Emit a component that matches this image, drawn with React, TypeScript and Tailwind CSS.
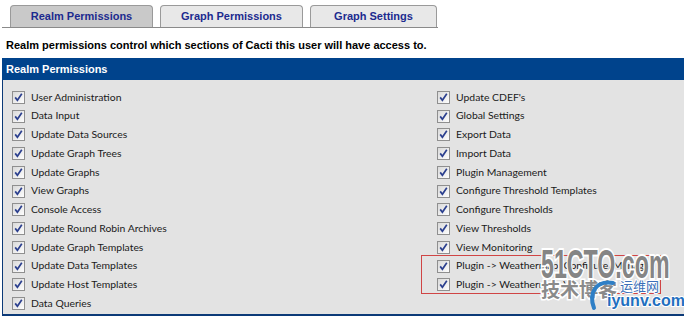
import React from 'react'

const LEFT = [
  'User Administration',
  'Data Input',
  'Update Data Sources',
  'Update Graph Trees',
  'Update Graphs',
  'View Graphs',
  'Console Access',
  'Update Round Robin Archives',
  'Update Graph Templates',
  'Update Data Templates',
  'Update Host Templates',
  'Data Queries',
]

const RIGHT = [
  "Update CDEF's",
  'Global Settings',
  'Export Data',
  'Import Data',
  'Plugin Management',
  'Configure Threshold Templates',
  'Configure Thresholds',
  'View Thresholds',
  'View Monitoring',
  'Plugin -> Weathermap: Configure/Manage',
  'Plugin -> Weathermap: View',
]

function Check() {
  return (
    <svg width="13" height="13" viewBox="0 0 13 13" className="shrink-0">
      <defs>
        <linearGradient id="cb" x1="0" y1="0" x2="1" y2="1">
          <stop offset="0" stopColor="#d8d8d8" />
          <stop offset="1" stopColor="#ffffff" />
        </linearGradient>
      </defs>
      <rect x="0.5" y="0.5" width="12" height="12" fill="url(#cb)" stroke="#8f8f8f" />
      <path d="M3.2 6.4 L5.4 9.2 L9.8 2.8" fill="none" stroke="#2b3f8e" strokeWidth="1.7" />
    </svg>
  )
}

function Row({ label }: { label: string }) {
  return (
    <div className="flex items-center h-[18.75px] gap-[6px] whitespace-nowrap">
      <Check />
      <span className="text-[10.4px] text-[#1a1a1a]" style={{ fontFamily: 'Lato, "Liberation Sans", sans-serif' }}>
        {label}
      </span>
    </div>
  )
}

export default function App() {
  const tabs = [
    { name: 'Realm Permissions', w: 'w-[143px]', active: true },
    { name: 'Graph Permissions', w: 'w-[143px]', active: false },
    { name: 'Graph Settings', w: 'w-[127px]', active: false },
  ]
  return (
    <div
      className="relative w-[684px] h-[320px] overflow-hidden bg-white"
      style={{ fontFamily: '"Liberation Sans", Arial, sans-serif' }}
    >
      {/* Tabs */}
      <div className="ml-[2px] w-[436px] pt-[5px] pl-[8px] flex gap-[7px] border-b border-[#8a8a8a]">
        {tabs.map((t) => (
          <div
            key={t.name}
            className={`${t.w} h-[22px] rounded-t-[4px] border border-b-0 border-[#9a9a9a] flex items-center justify-center text-[11px] font-bold text-[#1c2b8f] ${
              t.active ? 'bg-[#c9c9c9]' : 'bg-[#e8e8e8]'
            }`}
          >
            {t.name}
          </div>
        ))}
      </div>

      <div className="pl-[6px] pt-[9px] h-[30px] text-[11px] font-bold text-black">
        Realm permissions control which sections of Cacti this user will have access to.
      </div>

      {/* Panel */}
      <div className="ml-[2px] w-[682px]">
        <div className="h-[22px] bg-[#00438c] flex items-center pl-[4px] text-[11px] font-bold text-white">
          Realm Permissions
        </div>
        <div className="h-[236px] bg-[#e3e3e3] border-l border-b-2 border-[#0c3a78] pt-[8px] flex">
          <div className="w-[425px] pl-[9px]">
            {LEFT.map((l) => (
              <Row key={l} label={l} />
            ))}
          </div>
          <div className="flex-1 pl-[9px]">
            {RIGHT.map((l) => (
              <Row key={l} label={l} />
            ))}
          </div>
        </div>
      </div>

      {/* highlight box */}
      <div className="absolute left-[421px] top-[255px] w-[240px] h-[39px] border border-[#d04545]" />

      {/* watermark */}
      <div className="absolute left-[541px] top-[244px] w-[143px] h-[70px] flex flex-col [paint-order:stroke_fill]">
        <div className="h-[35px] whitespace-nowrap">
          <span className="inline-block text-[40px] font-bold text-[#858585] leading-none origin-left [transform:scaleX(0.58)] [-webkit-text-stroke:4px_#fff] [paint-order:stroke_fill]">
            51CTO.com
          </span>
        </div>
        <div className="flex items-start whitespace-nowrap" style={{ fontFamily: '"Noto Sans CJK SC", sans-serif' }}>
          <span className="w-[79px] text-[19px] font-bold text-[#8a8a8a] leading-none [-webkit-text-stroke:3px_#fff] [paint-order:stroke_fill]">
            技术博客
          </span>
          <span className="text-[13px] text-[#3b6fb8] leading-none [-webkit-text-stroke:2px_#fff] [paint-order:stroke_fill]">
            运维网
          </span>
        </div>
        <svg className="absolute left-[42px] top-[34px]" width="40" height="36" viewBox="0 0 40 36">
          <path d="M30 5 C14 2 5 14 11 30" fill="none" stroke="#2e7fc6" strokeWidth="4" strokeLinecap="round" />
        </svg>
        <div className="relative -mt-[5px] ml-[66px] whitespace-nowrap text-[16px] font-bold text-[#1f6fc0] leading-none [-webkit-text-stroke:2px_#fff] [paint-order:stroke_fill]">
          iyunv.com
        </div>
      </div>
    </div>
  )
}
